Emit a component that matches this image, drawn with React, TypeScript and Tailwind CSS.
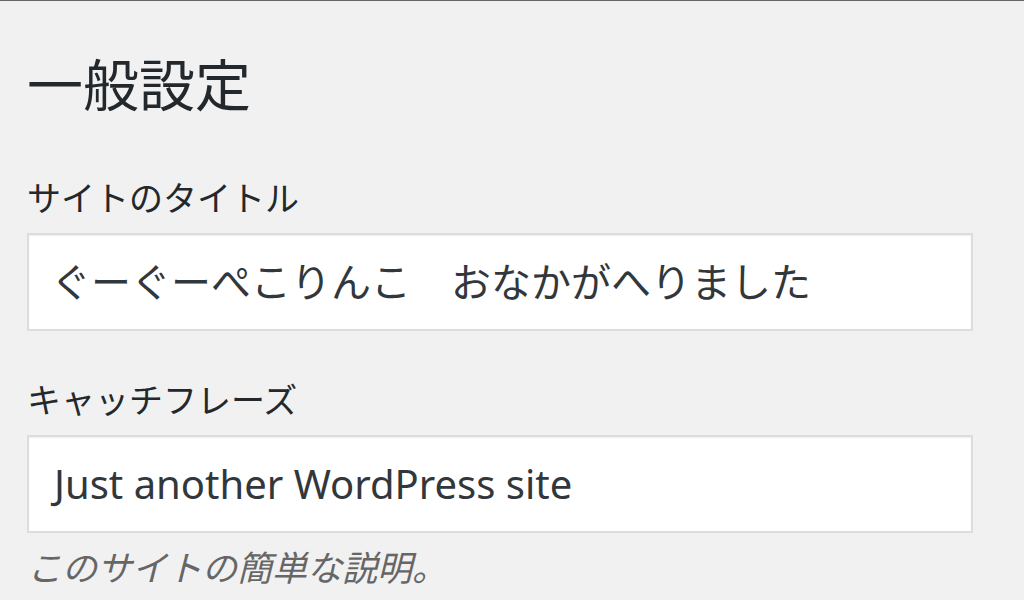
import React from 'react';

const font = { fontFamily: '"Noto Sans", "Noto Sans CJK JP", sans-serif' };

const App: React.FC = () => {
  return (
    <div className="w-[1024px] h-[600px] overflow-hidden bg-[#f1f1f1] border-t border-[#666]" style={font}>
      <div className="pl-[27px]">
        <h1 className="mt-[51px] text-[56px] leading-[64px] text-[#23282d] font-normal">一般設定</h1>

        <div className="mt-[62px] text-[34px] leading-[40px] text-[#23282d]">サイトのタイトル</div>
        <div className="mt-[15px] w-[946px] h-[98px] bg-white border-2 border-[#dddddd] shadow-[inset_0_1px_2px_rgba(0,0,0,0.07)] flex items-center pl-[22px]">
          <span className="text-[40px] text-[#32373c] whitespace-pre">ぐーぐーぺこりんこ　おなかがへりました</span>
        </div>

        <div className="mt-[49px] text-[34px] leading-[40px] text-[#23282d]">キャッチフレーズ</div>
        <div className="mt-[15px] w-[946px] h-[98px] bg-white border-2 border-[#dddddd] shadow-[inset_0_1px_2px_rgba(0,0,0,0.07)] flex items-center pl-[25px]">
          <span className="text-[40px] text-[#32373c]">Just another WordPress site</span>
        </div>

        <p className="mt-[15px] text-[35px] leading-[40px] italic text-[#666666]">このサイトの簡単な説明。</p>
      </div>
    </div>
  );
};

export default App;
